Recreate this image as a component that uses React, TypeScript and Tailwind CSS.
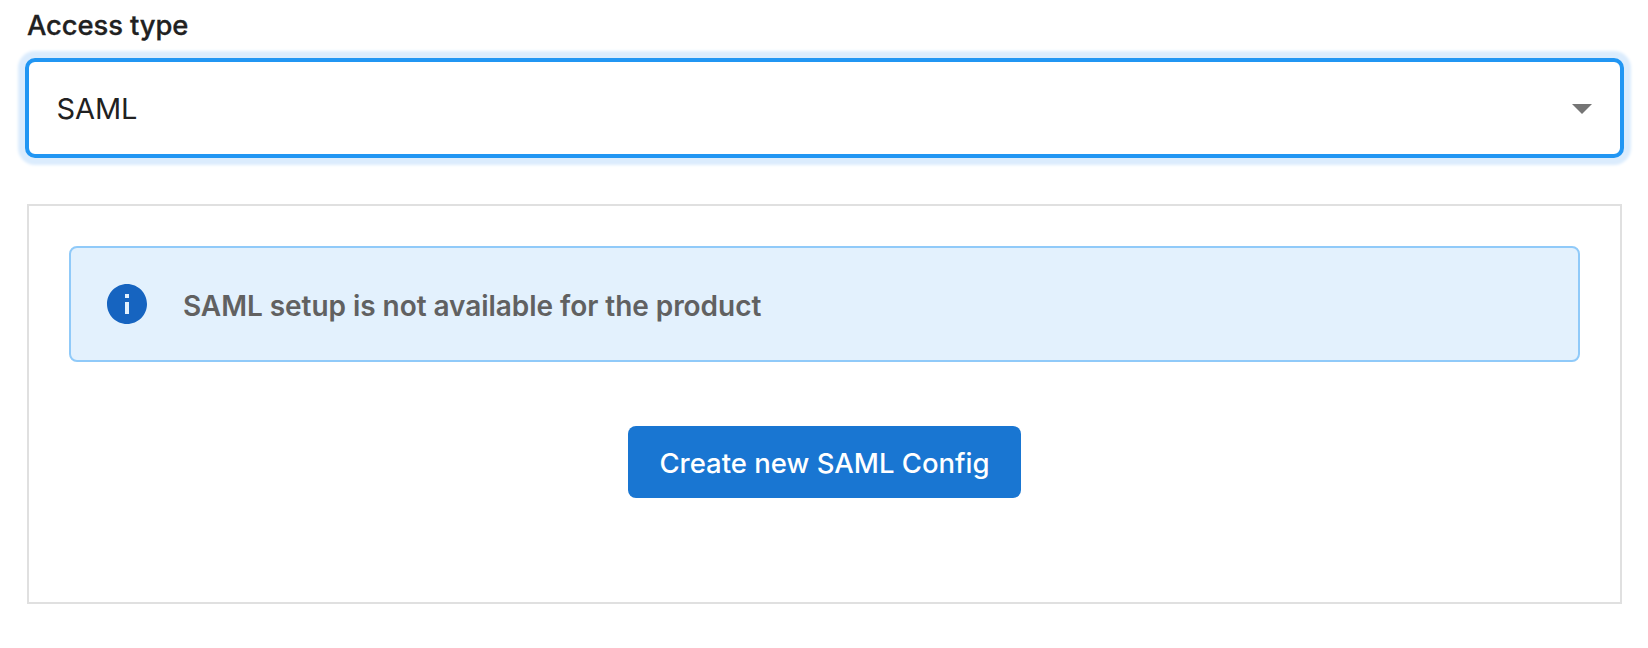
function InfoIcon() {
  return (
    <svg viewBox="0 0 24 24" className="size-12 shrink-0" fill="#1664c0">
      <path d="M12 2C6.48 2 2 6.48 2 12s4.48 10 10 10 10-4.48 10-10S17.52 2 12 2zm1 15h-2v-6h2v6zm0-8h-2V7h2v2z" />
    </svg>
  );
}

export default function App() {
  return (
    <div className="h-[648px] w-[1648px] bg-white pl-[25px] pr-6 pt-2 font-['Inter',sans-serif] text-[#212121]">
      <div className="ml-0.5 h-[50px] text-[27.4px] leading-[34px] font-medium tracking-[-0.1px] whitespace-nowrap [-webkit-text-stroke:0.3px_#212121]">
        Access type
      </div>
      <div className="flex h-[100px] items-center justify-between rounded-[10px] border-4 border-[#2196f3] bg-white pt-0.5 pr-7 pl-[27.5px] shadow-[0_0_3px_7px_#dbecfd]">
        <span className="text-[29px] leading-9 tracking-[-0.1px]">SAML</span>
        <svg viewBox="0 0 20 10" className="h-2.5 w-5" fill="#757575">
          <path d="M0 0h20L10 10z" />
        </svg>
      </div>
      <div className="ml-0.5 mr-0.5 mt-[46px] flex h-[400px] flex-col items-center border-2 border-[#e0e0e0] px-10 pt-10">
        <div className="flex h-[116px] w-full items-center gap-8 rounded-lg border-2 border-[#90caf9] bg-[#e3f1fd] pl-8">
          <InfoIcon />
          <span className="pt-1 text-[28px] leading-9 font-semibold tracking-[-0.05px] whitespace-nowrap text-[#616161]">
            SAML setup is not available for the product
          </span>
        </div>
        <button className="mt-16 h-[72px] w-[393px] rounded-lg bg-[#1976d2] pt-0.5 text-[27.5px] leading-9 font-medium whitespace-nowrap text-white">
          Create new SAML Config
        </button>
      </div>
    </div>
  );
}
